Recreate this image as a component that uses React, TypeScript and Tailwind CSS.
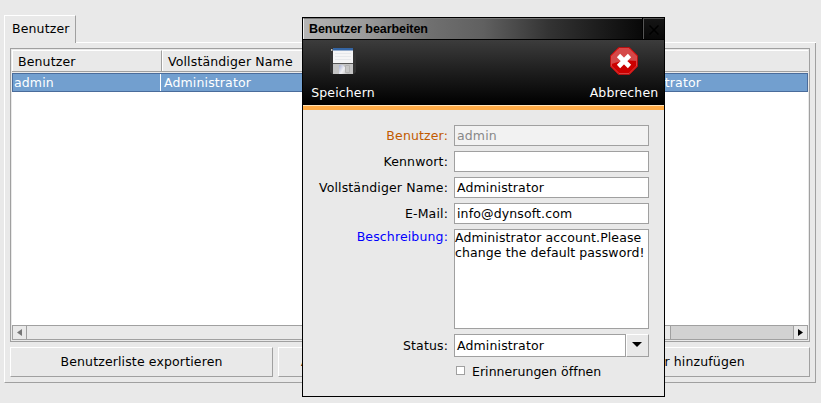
import type { ReactNode } from "react";

const raised = "border border-t-white border-l-white border-r-[#a0a0a0] border-b-[#a0a0a0] bg-[#e9e9e9]";

function FormRow({ label, children, color = "text-black", height = "h-[21px]" }: {
  label: string; children: ReactNode; color?: string; height?: string;
}) {
  return (
    <div className={`flex ${height} mb-[5px] shrink-0`}>
      <div className={`w-[145px] whitespace-nowrap text-right leading-[21px] ${color}`}>{label}</div>
      <div className="ml-[6px] w-[195px]">{children}</div>
    </div>
  );
}

function Field({ value, disabled = false }: { value: string; disabled?: boolean }) {
  return (
    <div className={`h-[21px] border border-[#a0a0a0] pl-[2px] leading-[19px] ${disabled ? "bg-[#f2f2f2] text-[#888]" : "bg-white"}`}>
      {value}
    </div>
  );
}

function SaveIcon() {
  return (
    <svg width="28" height="28" viewBox="0 0 28 28" className="block">
      <defs>
        <linearGradient id="shine" x1="0" y1="0" x2="1" y2="0.5">
          <stop offset="0" stopColor="#a7afd0" />
          <stop offset="0.5" stopColor="#f0f0f4" />
          <stop offset="1" stopColor="#bdbdbd" />
        </linearGradient>
      </defs>
      <path d="M2 1h23l2 2v22l-2 2H3l-2-2V2z" fill="#333" />
      <path d="M2 2h1.500v2H2z" fill="#bbb" />
      <path d="M4 1h20v15H4z" fill="#f5f5f6" />
      <path d="M4 1h20v2.500H4z" fill="#3465a4" />
      <path d="M6 6.500h16M6 9.500h16M6 12.500h16" stroke="#e6e8eb" />
      <path d="M4 16h20v1H4z" fill="#555" />
      <path d="M4 17h20v10H4z" fill="#c4c4c4" />
      <path d="M10 18h4l7 9H10z" fill="url(#shine)" />
      <path d="M16.500 18.500h4v7h-4z" fill="#c6c6c6" stroke="#b2b2b2" />
    </svg>
  );
}

function CancelIcon() {
  return (
    <svg width="28" height="28" viewBox="0 0 28 28" className="block">
      <path d="M8.500.5h11l8 8v11l-8 8h-11l-8-8v-11z" fill="#cc0000" stroke="#b31212" />
      <path d="M9 1.500h10l7.500 7.500v5q-12-2-25 3V9z" fill="#d54848" />
      <path d="M9 1.500h10l7.500 7.500v10l-7.500 7.500H9L1.500 19V9z" fill="none" stroke="#dd5050" strokeWidth="0.8" />
      <path d="M8.500 8.500l11 11M19.500 8.500l-11 11" stroke="#fff" strokeWidth="4.600" />
    </svg>
  );
}

function Dialog() {
  return (
    <div className="absolute left-[302px] top-[17px] flex h-[380px] w-[363px] flex-col border border-black bg-[#e9e9e9]">
      <div className="flex h-[22px] shrink-0 border-b border-black">
        <div className="h-[21px] w-[339px] border-l border-t border-l-[#eee] border-t-[#777] bg-[linear-gradient(90deg,#b5b5b5_0px,#9c9c9c_60px,#707070_125px,#606060_180px,#333333_245px,#080808_339px)] pl-[5px] font-['Liberation_Sans',sans-serif] text-[12.5px] font-bold leading-[20px] tracking-[-0.07px]">
          <span className="inline-block whitespace-nowrap">Benutzer bearbeiten</span>
        </div>
        <div className="h-full w-px bg-black" />
        <div className="flex flex-1 items-center justify-center border-l border-t border-[#555] bg-[linear-gradient(#151515,#080808)] pt-px">
          <svg width="10" height="10" viewBox="0 0 10 10"><path d="M.5.5l9 9M9.500.5l-9 9" stroke="#000" strokeWidth="1.500" /></svg>
        </div>
      </div>
      <div className="flex h-[65px] shrink-0 justify-between bg-[linear-gradient(#3c3c3c,#1d1d1d_50%,#000)] text-white">
        <div className="flex w-[80px] flex-col items-center pt-[7px]">
          <SaveIcon />
          <span className="mt-[10px] leading-[16px]">Speichern</span>
        </div>
        <div className="flex w-[80px] flex-col items-center pt-[7px]">
          <CancelIcon />
          <span className="mt-[10px] leading-[16px]">Abbrechen</span>
        </div>
      </div>
      <div className="h-[5px] shrink-0 border-t border-[#ffe2b8] bg-[#ffab46]" />
      <div className="flex flex-col pt-[15px]">
        <FormRow label="Benutzer:" color="text-[#c25a00]"><Field value="admin" disabled /></FormRow>
        <FormRow label="Kennwort:"><Field value="" /></FormRow>
        <FormRow label="Vollständiger Name:"><Field value="Administrator" /></FormRow>
        <FormRow label="E-Mail:"><Field value="info@dynsoft.com" /></FormRow>
        <FormRow label="Beschreibung:" color="text-[#0000ff] -mt-[3px]" height="h-[100px]">
          <div className="h-full whitespace-nowrap border border-[#a0a0a0] bg-white leading-[15px] tracking-[0.1px]">
            Administrator account.Please<br />change the default password!
          </div>
        </FormRow>
        <FormRow label="Status:" height="h-[23px]" color="mt-[1px]">
          <div className="flex h-full">
            <div className="w-[172px] border border-[#a0a0a0] bg-white pl-[2px] leading-[21px]">Administrator</div>
            <div className={`flex-1 pl-[5px] pt-[7px] ${raised}`}>
              <svg width="10" height="5" viewBox="0 0 10 5" className="block"><path d="M0 0h10L5 5z" /></svg>
            </div>
          </div>
        </FormRow>
        <div className="flex items-start pl-[153px]">
          <div className="mt-[4px] h-[9px] w-[9px] border border-[#a0a0a0] bg-white" />
          <span className="ml-[7px] leading-[20px] tracking-[0.04px]">Erinnerungen öffnen</span>
        </div>
      </div>
    </div>
  );
}

export default function App() {
  return (
    <div className="relative h-[403px] w-[821px] overflow-hidden bg-[#e9e9e9] pl-[4px] pt-[15px] font-['DejaVu_Sans',sans-serif] text-[12.5px] tracking-[0.14px] text-black">
      <div className="flex h-[28px]">
        <div className="w-[72px] border-l border-r border-t border-l-white border-r-[#a0a0a0] border-t-white pl-[7px] leading-[25px]">Benutzer</div>
        <div className="w-[740px] border-b border-white" />
      </div>
      <div className="flex h-[340px] w-[812px] flex-col border-b border-l border-r border-b-[#a0a0a0] border-l-white border-r-[#a0a0a0] pl-[5px] pr-[5px] pt-[5px]">
        <div className="flex h-[294px] w-[800px] flex-col border border-[#a0a0a0] p-px">
          <div className="flex h-[22px] shrink-0 border-b border-[#a0a0a0]">
            <div className="w-[150px] border-l border-r border-t border-l-white border-r-[#a0a0a0] border-t-white pl-[5px] leading-[21px]">Benutzer</div>
            <div className="flex-1 border-l border-t border-white pl-[5px] leading-[21px]">Vollständiger Name</div>
          </div>
          <div className="mt-px flex h-[19px] shrink-0 border border-[#4a6c9b] bg-[#729fcf] leading-[17px] text-white">
            <div className="w-[148px] border-r border-white pl-px">admin</div>
            <div className="w-[451px] pl-[3px]">Administrator</div>
            <div className="pl-[2px]">Administrator</div>
          </div>
          <div className="flex-1 bg-white" />
          <div className="flex h-[15px] shrink-0 border border-[#a0a0a0]">
            <div className="flex w-[14px] items-center border-r border-[#a0a0a0] pl-[4px]">
              <svg width="5" height="7" viewBox="0 0 5 7"><path d="M5 0v7L0 3.500z" fill="#777" /></svg>
            </div>
            <div className="w-[644px] border-r border-[#a0a0a0]" />
            <div className="flex-1 bg-[#d2d2d2]" />
            <div className="flex w-[14px] items-center border-l border-[#a0a0a0] pl-[4px]">
              <svg width="5" height="7" viewBox="0 0 5 7"><path d="M0 0v7L5 3.500z" /></svg>
            </div>
          </div>
        </div>
        <div className="mt-[5px] flex gap-[5px] text-center leading-[28px]">
          <div className={`h-[30px] w-[263px] ${raised}`}>Benutzerliste exportieren</div>
          <div className={`h-[30px] w-[264px] pl-[22px] text-left ${raised}`}>A</div>
          <div className={`h-[30px] w-[263px] ${raised}`}>Benutzer hinzufügen</div>
        </div>
      </div>
      <Dialog />
    </div>
  );
}
